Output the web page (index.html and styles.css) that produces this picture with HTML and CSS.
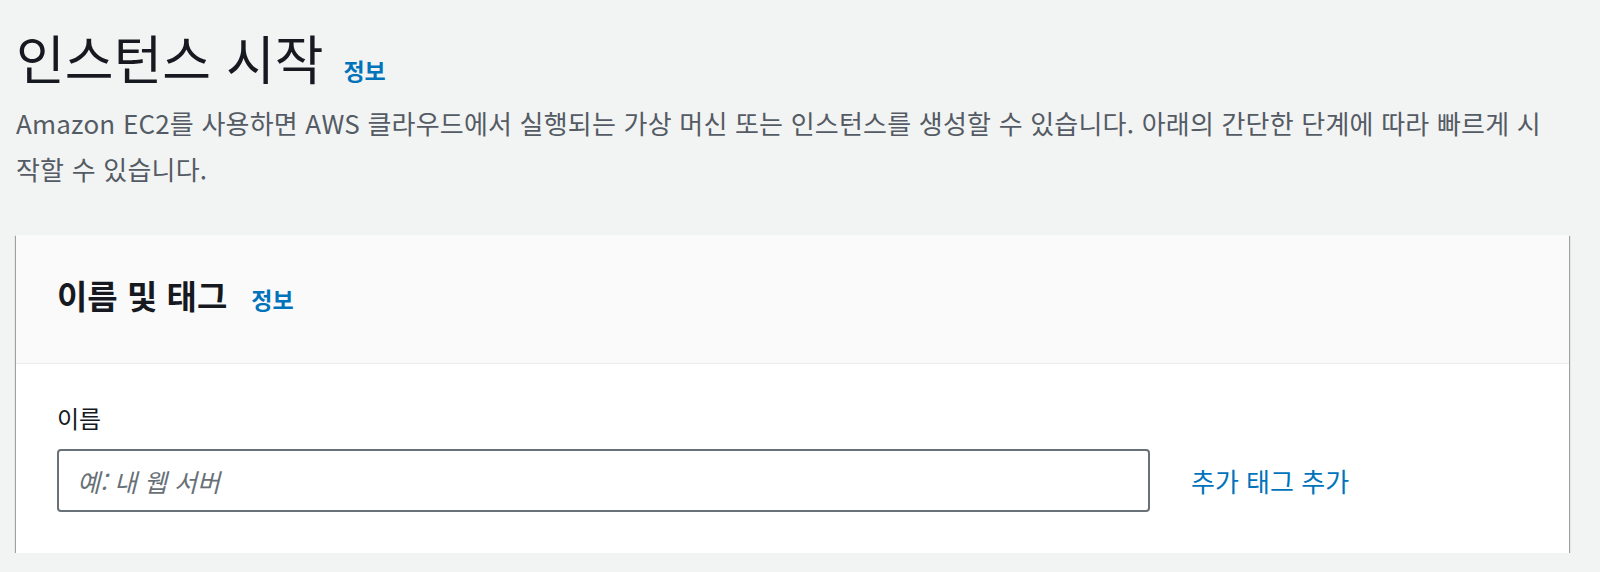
FILE: index.html
```html
<!DOCTYPE html>
<html lang="ko">
<head>
<meta charset="utf-8">
<title>인스턴스 시작</title>
<link rel="stylesheet" href="styles.css">
</head>
<body>
<main class="page">
  <header class="page-header">
    <div class="title-row">
      <h1 class="page-title">인스턴스 시작</h1>
      <a class="info-link info-link--lg" href="#">정보</a>
    </div>
    <p class="page-desc">Amazon EC2를 사용하면 AWS 클라우드에서 실행되는 가상 머신 또는 인스턴스를 생성할 수 있습니다. 아래의 간단한 단계에 따라 빠르게 시작할 수 있습니다.</p>
  </header>

  <section class="card">
    <div class="card-header">
      <h2 class="card-title">이름 및 태그</h2>
      <a class="info-link info-link--md" href="#">정보</a>
    </div>
    <div class="card-body">
      <label class="field-label" for="name">이름</label>
      <div class="field-row">
        <input class="text-input" id="name" type="text" placeholder="예: 내 웹 서버">
        <a class="action-link" href="#">추가 태그 추가</a>
      </div>
    </div>
  </section>
</main>
</body>
</html>
```

FILE: styles.css
```css
* {
  box-sizing: border-box;
}

html, body {
  margin: 0;
  padding: 0;
}

body {
  background: #f2f3f3;
  font-family: "Noto Sans CJK KR", "Noto Sans", sans-serif;
  color: #16191f;
}

.page {
  width: 1569px;
  padding: 28px 0 0 16px;
}

.title-row {
  display: flex;
  align-items: baseline;
  gap: 20px;
}

.page-title {
  margin: 0;
  font-size: 53px;
  line-height: 58px;
  font-weight: 400;
  color: #16191f;
}

.info-link {
  color: #0073bb;
  text-decoration: none;
  font-weight: 700;
}

.info-link--lg {
  font-size: 23px;
}

.info-link--md {
  font-size: 23px;
}

.page-desc {
  max-width: 1528px;
  margin: 13px 0 0 0;
  font-size: 26px;
  line-height: 46px;
  letter-spacing: 0.2px;
  color: #545b64;
}

.card {
  margin-top: 43px;
  background: #ffffff;
  box-shadow: 0 1px 1px 0 rgba(0, 28, 36, 0.5),
              1px 1px 1px 0 rgba(0, 28, 36, 0.3),
              -1px 1px 1px 0 rgba(0, 28, 36, 0.3);
}

.card-header {
  display: flex;
  align-items: baseline;
  gap: 24px;
  background: #fafafa;
  border-bottom: 1px solid #eaeded;
  padding: 40px 41px 47px 41px;
}

.card-title {
  margin: 0;
  font-size: 33px;
  line-height: 40px;
  font-weight: 700;
  color: #16191f;
}

.card-body {
  padding: 39px 41px 41px 41px;
}

.field-label {
  display: block;
  font-size: 24px;
  line-height: 30px;
  color: #16191f;
}

.field-row {
  margin-top: 16px;
  display: flex;
  align-items: center;
  gap: 41px;
}

.text-input {
  width: 1093px;
  height: 63px;
  border: 2px solid #687078;
  border-radius: 4px;
  padding: 0 18px;
  font-family: inherit;
  font-size: 25px;
  color: #16191f;
  background: #fff;
  outline: none;
}

.text-input::placeholder {
  color: #687078;
  font-style: italic;
}

.action-link {
  color: #0073bb;
  text-decoration: none;
  font-size: 26px;
  line-height: 30px;
}
```
